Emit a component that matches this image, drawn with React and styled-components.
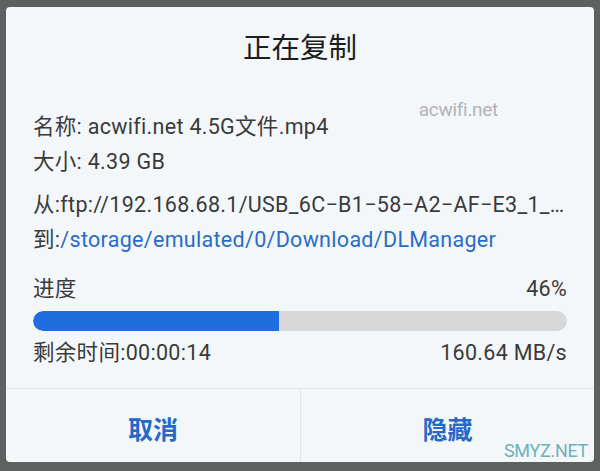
import styled, { createGlobalStyle } from "styled-components";

const GlobalStyle = createGlobalStyle`
  html, body { margin: 0; padding: 0; }
  body {
    background: #5d6160;
    font-family: Roboto, "Noto Sans CJK SC", sans-serif;
  }
`;

//Outer
const Screen = styled.div`
  width: 600px;
  height: 471px;
  padding: 7px 6px 9px 6px;
  box-sizing: border-box;
  background: #5d6160;
`;
const Dialog = styled.div`
  position: relative;
  height: 100%;
  background: #f4f7fa;
  border-radius: 4px;
  display: flex;
  flex-direction: column;
  overflow: hidden;
`;

//Header
const Title = styled.h1`
  margin: 0;
  padding-top: 24px;
  height: 36px;
  line-height: 36px;
  text-align: center;
  font-size: 28.5px;
  font-weight: 400;
  color: #1d1d1d;
`;

//Info
const Body = styled.div`
  padding: 0 27px;
  flex: 1;
  display: flex;
  flex-direction: column;
`;
const InfoList = styled.div`
  margin-top: 47px;
  display: flex;
  flex-direction: column;
`;
const InfoRow = styled.div`
  height: ${(p) => p.h}px;
  line-height: 26px;
  font-size: 21.5px;
  letter-spacing: 0.3px;
  color: #3a3a3a;
  white-space: nowrap;
  overflow: hidden;
`;
const Link = styled.span`
  color: #2a6cc6;
`;

//Progress
const Progress = styled.div`
  margin-top: 23px;
`;
const Line = styled.div`
  display: flex;
  justify-content: space-between;
  font-size: 21.5px;
  letter-spacing: 0.3px;
  line-height: 26px;
  color: #3a3a3a;
`;
const Track = styled.div`
  margin: 9px 0 9px;
  height: 20px;
  border-radius: 10px;
  background: #d8d8d8;
  overflow: hidden;
`;
const Fill = styled.div`
  height: 100%;
  background: #1f6ee0;
  border-radius: 10px 0 0 10px;
`;

//Buttons
const Footer = styled.div`
  display: grid;
  grid-template-columns: 1fr 1fr;
  height: 73px;
  border-top: 1px solid #e3e6e9;
`;
const Button = styled.button`
  border: none;
  border-left: ${(p) => (p.divider ? "1px solid #e3e6e9" : "none")};
  background: transparent;
  font-family: "Noto Sans CJK SC", sans-serif;
  font-size: 25px;
  font-weight: 700;
  color: #2468c8;
  padding: 4px 0 0;
`;

//Watermarks
const Mark = styled.div`
  position: absolute;
  font-family: Roboto, sans-serif;
  font-size: ${(p) => p.size}px;
  color: ${(p) => p.color};
  right: ${(p) => p.right}px;
  top: ${(p) => p.top}px;
  letter-spacing: -0.3px;
`;

const App = () => {
  const percent = 46;
  return (
    <>
      <GlobalStyle />
      <Screen>
        <Dialog>
          <Title>正在复制</Title>
          <Body>
            <InfoList>
              <InfoRow h={35}>名称: acwifi.net 4.5G文件.mp4</InfoRow>
              <InfoRow h={43}>大小: 4.39 GB</InfoRow>
              <InfoRow h={35}>从:ftp://192.168.68.1/USB_6C−B1−58−A2−AF−E3_1_…</InfoRow>
              <InfoRow h={26}>
                到:<Link>/storage/emulated/0/Download/DLManager</Link>
              </InfoRow>
            </InfoList>
            <Progress>
              <Line>
                <span>进度</span>
                <span>{percent}%</span>
              </Line>
              <Track>
                <Fill style={{ width: `${percent}%` }} />
              </Track>
              <Line>
                <span>剩余时间:00:00:14</span>
                <span>160.64 MB/s</span>
              </Line>
            </Progress>
          </Body>
          <Footer>
            <Button>取消</Button>
            <Button divider>隐藏</Button>
          </Footer>
          <Mark size={19} color="#b3b3b3" right={96} top={91}>
            acwifi.net
          </Mark>
          <Mark size={18} color="#6fb0bd" right={6} top={433}>
            SMYZ.NET
          </Mark>
        </Dialog>
      </Screen>
    </>
  );
};

export default App;
